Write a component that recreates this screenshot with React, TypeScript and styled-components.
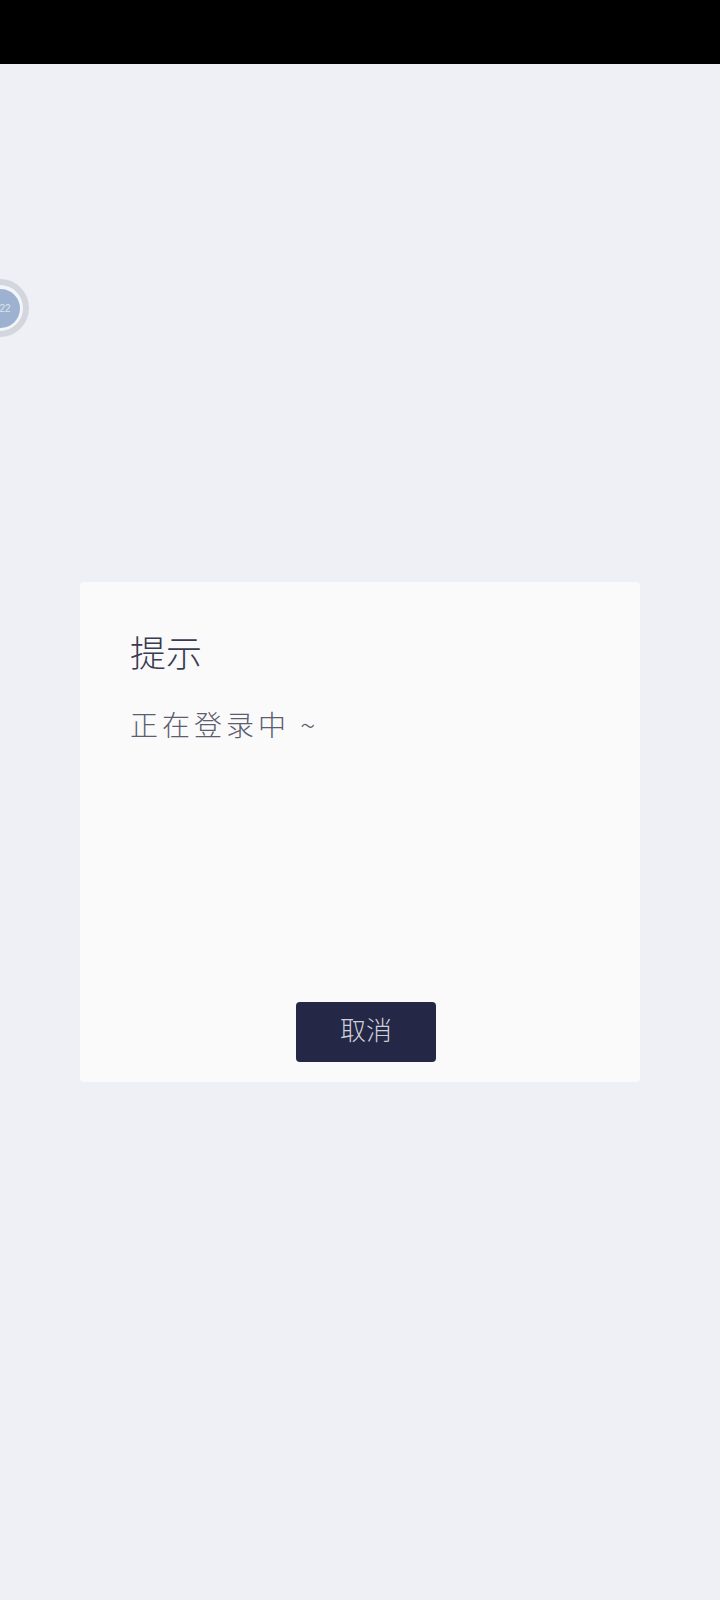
import React from 'react';
import styled, { createGlobalStyle } from 'styled-components';

const GlobalStyle = createGlobalStyle`
  html, body {
    margin: 0;
    padding: 0;
    background: #eff0f5;
  }
  * {
    box-sizing: border-box;
  }
`;

const Page = styled.div`
  position: relative;
  width: 720px;
  height: 1600px;
  display: flex;
  flex-direction: column;
  overflow: hidden;
  background: #eff0f5;
  font-family: 'Noto Sans CJK SC', 'Noto Sans', sans-serif;
`;

const StatusBar = styled.div`
  height: 64px;
  flex-shrink: 0;
  background: #000;
`;

const Main = styled.div`
  flex: 1;
  display: flex;
  align-items: center;
  justify-content: center;
`;

const Dialog = styled.div`
  width: 560px;
  height: 500px;
  padding: 45px 50px 20px;
  display: flex;
  flex-direction: column;
  background: #fafafb;
  border-radius: 4px;
`;

const Title = styled.div`
  font-size: 36px;
  line-height: 48px;
  font-weight: 300;
  color: #3a3b52;
`;

const Message = styled.div`
  margin-top: 29px;
  font-size: 28px;
  line-height: 40px;
  letter-spacing: 4px;
  font-weight: 300;
  color: #5c5d70;
`;

const Actions = styled.div`
  margin-top: auto;
  padding-left: 166px;
`;

const CancelButton = styled.button`
  width: 140px;
  height: 60px;
  padding: 0 0 7px;
  border: none;
  border-radius: 4px;
  background: #242745;
  color: #cfd0d8;
  font-family: inherit;
  font-size: 26px;
  font-weight: 300;
`;

const FloatBadge = styled.div`
  position: absolute;
  left: -29px;
  top: 279px;
  width: 58px;
  height: 58px;
  display: flex;
  align-items: center;
  justify-content: center;
  border: 6px solid #d3d6dc;
  border-radius: 50%;
  background: #f2f5fa;
`;

const BadgeCore = styled.div`
  width: 39px;
  height: 39px;
  display: flex;
  align-items: center;
  justify-content: center;
  padding-left: 10px;
  border-radius: 50%;
  background: #9db2d1;
  color: #dde4ef;
  font-family: 'Liberation Sans', sans-serif;
  font-size: 10px;
`;

const App: React.FC = () => {
  return (
    <Page>
      <GlobalStyle />
      <StatusBar />
      <Main>
        <Dialog>
          <Title>提示</Title>
          <Message>正在登录中 ~</Message>
          <Actions>
            <CancelButton>取消</CancelButton>
          </Actions>
        </Dialog>
      </Main>
      <FloatBadge>
        <BadgeCore>22</BadgeCore>
      </FloatBadge>
    </Page>
  );
};

export default App;
